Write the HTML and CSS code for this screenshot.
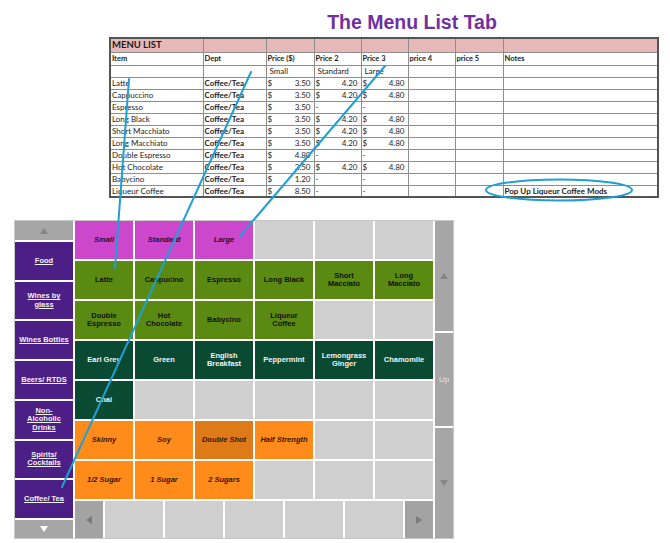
FILE: index.html
```html
<!DOCTYPE html>
<html lang="en">
<head>
  <meta charset="UTF-8">
  <title>The Menu List Tab</title>
  <link rel="stylesheet" href="styles.css">
</head>
<body>
<h1 class="title">The Menu List Tab</h1>

<table class="sheet">
  <colgroup>
    <col class="w-item"><col class="w-dept"><col class="w-p1"><col class="w-p">
    <col class="w-p"><col class="w-p"><col class="w-p5"><col class="w-notes">
  </colgroup>
  <tr class="head-row">
    <td class="sheet-name">MENU LIST</td><td></td><td></td><td></td><td></td><td></td><td></td><td></td>
  </tr>
  <tr class="col-row">
    <td>Item</td><td>Dept</td><td>Price ($)</td><td>Price 2</td><td>Price 3</td><td>price 4</td><td>price 5</td><td>Notes</td>
  </tr>
  <tr class="size-row">
    <td></td><td></td><td>Small</td><td>Standard</td><td>Large</td><td></td><td></td><td></td>
  </tr>
  <tr>
    <td>Latte</td><td class="dept">Coffee/Tea</td>
    <td><div class="money"><span>$</span><span>3.50</span></div></td>
    <td><div class="money"><span>$</span><span>4.20</span></div></td>
    <td><div class="money"><span>$</span><span>4.80</span></div></td>
    <td></td><td></td><td></td>
  </tr>
  <tr>
    <td>Cappuccino</td><td class="dept">Coffee/Tea</td>
    <td><div class="money"><span>$</span><span>3.50</span></div></td>
    <td><div class="money"><span>$</span><span>4.20</span></div></td>
    <td><div class="money"><span>$</span><span>4.80</span></div></td>
    <td></td><td></td><td></td>
  </tr>
  <tr>
    <td>Espresso</td><td class="dept">Coffee/Tea</td>
    <td><div class="money"><span>$</span><span>3.50</span></div></td>
    <td>-</td><td>-</td>
    <td></td><td></td><td></td>
  </tr>
  <tr>
    <td>Long Black</td><td class="dept">Coffee/Tea</td>
    <td><div class="money"><span>$</span><span>3.50</span></div></td>
    <td><div class="money"><span>$</span><span>4.20</span></div></td>
    <td><div class="money"><span>$</span><span>4.80</span></div></td>
    <td></td><td></td><td></td>
  </tr>
  <tr>
    <td>Short Macchiato</td><td class="dept">Coffee/Tea</td>
    <td><div class="money"><span>$</span><span>3.50</span></div></td>
    <td><div class="money"><span>$</span><span>4.20</span></div></td>
    <td><div class="money"><span>$</span><span>4.80</span></div></td>
    <td></td><td></td><td></td>
  </tr>
  <tr>
    <td>Long Macchiato</td><td class="dept">Coffee/Tea</td>
    <td><div class="money"><span>$</span><span>3.50</span></div></td>
    <td><div class="money"><span>$</span><span>4.20</span></div></td>
    <td><div class="money"><span>$</span><span>4.80</span></div></td>
    <td></td><td></td><td></td>
  </tr>
  <tr>
    <td>Double Espresso</td><td class="dept">Coffee/Tea</td>
    <td><div class="money"><span>$</span><span>4.80</span></div></td>
    <td>-</td><td>-</td>
    <td></td><td></td><td></td>
  </tr>
  <tr>
    <td>Hot Chocolate</td><td class="dept">Coffee/Tea</td>
    <td><div class="money"><span>$</span><span>3.50</span></div></td>
    <td><div class="money"><span>$</span><span>4.20</span></div></td>
    <td><div class="money"><span>$</span><span>4.80</span></div></td>
    <td></td><td></td><td></td>
  </tr>
  <tr>
    <td>Babycino</td><td class="dept">Coffee/Tea</td>
    <td><div class="money"><span>$</span><span>1.20</span></div></td>
    <td>-</td><td>-</td>
    <td></td><td></td><td></td>
  </tr>
  <tr>
    <td>Liqueur Coffee</td><td class="dept">Coffee/Tea</td>
    <td><div class="money"><span>$</span><span>8.50</span></div></td>
    <td>-</td><td>-</td>
    <td></td><td></td><td class="dept">Pop Up Liqueur Coffee Mods</td>
  </tr>
</table>

<div class="pos">
  <div class="dept-col">
    <div class="scroll-btn"><span class="tri up"></span></div>
    <div class="dept-btn"><span>Food</span></div>
    <div class="dept-btn"><span>Wines by glass</span></div>
    <div class="dept-btn"><span>Wines Bottles</span></div>
    <div class="dept-btn"><span>Beers/ RTDS</span></div>
    <div class="dept-btn"><span>Non-Alcoholic Drinks</span></div>
    <div class="dept-btn"><span>Spirits/ Cocktails</span></div>
    <div class="dept-btn"><span>Coffee/ Tea</span></div>
    <div class="scroll-btn short"><span class="tri down white"></span></div>
  </div>

  <div class="main-col">
    <div class="item-grid">
      <div class="item mod">Small</div>
      <div class="item mod">Standard</div>
      <div class="item mod">Large</div>
      <div class="item"></div>
      <div class="item"></div>
      <div class="item"></div>

      <div class="item coffee">Latte</div>
      <div class="item coffee">Cappucino</div>
      <div class="item coffee">Espresso</div>
      <div class="item coffee">Long Black</div>
      <div class="item coffee">Short<br>Macciato</div>
      <div class="item coffee">Long<br>Macciato</div>

      <div class="item coffee">Double<br>Espresso</div>
      <div class="item coffee">Hot<br>Chocolate</div>
      <div class="item coffee">Babycino</div>
      <div class="item coffee">Liqueur<br>Coffee</div>
      <div class="item"></div>
      <div class="item"></div>

      <div class="item tea">Earl Grey</div>
      <div class="item tea">Green</div>
      <div class="item tea">English<br>Breakfast</div>
      <div class="item tea">Peppermint</div>
      <div class="item tea">Lemongrass<br>Ginger</div>
      <div class="item tea">Chamomile</div>

      <div class="item tea">Chai</div>
      <div class="item"></div>
      <div class="item"></div>
      <div class="item"></div>
      <div class="item"></div>
      <div class="item"></div>

      <div class="item extra">Skinny</div>
      <div class="item extra">Soy</div>
      <div class="item extra on">Double Shot</div>
      <div class="item extra">Half Strength</div>
      <div class="item"></div>
      <div class="item"></div>

      <div class="item extra">1/2 Sugar</div>
      <div class="item extra">1 Sugar</div>
      <div class="item extra">2 Sugars</div>
      <div class="item"></div>
      <div class="item"></div>
      <div class="item"></div>
    </div>

    <div class="page-bar">
      <div class="page-btn"><span class="tri left"></span></div>
      <div class="page-slot"></div>
      <div class="page-slot"></div>
      <div class="page-slot"></div>
      <div class="page-slot"></div>
      <div class="page-slot"></div>
      <div class="page-btn"><span class="tri right"></span></div>
    </div>
  </div>

  <div class="side-col">
    <div class="side-seg tall"><span class="tri up"></span></div>
    <div class="side-seg mid">Up</div>
    <div class="side-seg tall"><span class="tri down"></span></div>
  </div>
</div>

<!-- callouts linking spreadsheet rows to the buttons they create -->
<svg class="callouts" width="670" height="543" viewBox="0 0 670 543">
  <line x1="129" y1="79" x2="115" y2="268" />
  <line x1="251" y1="72" x2="62" y2="487" />
  <line x1="385" y1="66" x2="240" y2="236" />
  <ellipse cx="559" cy="190" rx="73" ry="10.5" />
</svg>
</body>
</html>
```

FILE: styles.css
```css
body {
  margin: 0;
  width: 670px;
  height: 543px;
  position: relative;
  overflow: hidden;
  background: #fff;
  font-family: "Liberation Sans", Arial, sans-serif;
}
.title {
  margin: 0;
  padding: 11px 0 0 154px;
  font-size: 19.5px;
  line-height: 22px;
  text-align: center;
  color: #7030a0;
}

/* spreadsheet */
.sheet {
  margin: 4px 0 0 109px;
  width: 548px;
  border-collapse: collapse;
  table-layout: fixed;
  border: 2px solid #555;
  font-family: Lato, "Liberation Sans", sans-serif;
  font-size: 8px;
  color: #1c1c1c;
}
.w-item { width: 93px; }
.w-dept { width: 63px; }
.w-p1 { width: 48px; }
.w-p { width: 47px; }
.w-p5 { width: 48px; }
.w-notes { width: 155px; }
.sheet tr {
  height: 12px;
}
.sheet td {
  border: 1px solid #8e8e8e;
  padding: 0 1px;
  line-height: 10px;
  white-space: nowrap;
  overflow: hidden;
}
.head-row {
  background: #e6b8b7;
}
.sheet .head-row {
  height: 14px;
}
.sheet-name {
  font-weight: bold;
  font-size: 9.5px;
}
.sheet .col-row {
  height: 13px;
}
.col-row td {
  font-weight: bold;
  font-size: 7.5px;
}
.size-row td {
  padding-left: 3px;
}
.dept {
  font-weight: bold;
}
.money {
  display: flex;
  justify-content: space-between;
  padding-right: 2px;
}

/* till layout */
.pos {
  margin: 22px 0 0 14px;
  width: 438px;
  height: 317px;
  border: 1px solid #c8c8c8;
  display: flex;
  gap: 2px;
}
.dept-col {
  width: 58px;
  display: flex;
  flex-direction: column;
  gap: 2px;
}
.scroll-btn {
  height: 19px;
  background: #a6a6a6;
  display: flex;
  align-items: center;
  justify-content: center;
}
.scroll-btn.short {
  height: 18px;
}
.dept-btn {
  flex: 1;
  background: #4b1f86;
  display: flex;
  align-items: center;
  justify-content: center;
  text-align: center;
  padding: 0 4px;
  color: #f2f2f2;
  font-size: 7.5px;
  font-weight: bold;
  line-height: 8.5px;
}
.dept-btn span {
  text-decoration: underline;
}
.main-col {
  width: 358px;
  display: flex;
  flex-direction: column;
  gap: 2px;
}
.item-grid {
  display: grid;
  grid-template-columns: repeat(6, 58px);
  grid-template-rows: repeat(7, 38px);
  gap: 2px;
}
.item {
  background: #cfcfcf;
  display: flex;
  align-items: center;
  justify-content: center;
  text-align: center;
  font-size: 7.5px;
  font-weight: bold;
  line-height: 8.5px;
  color: #111;
}
.item.mod {
  background: #cc47cc;
  color: #2c0d33;
  font-style: italic;
}
.item.coffee {
  background: #5a8a12;
}
.item.tea {
  background: #0a4a33;
  color: #f4f4f4;
}
.item.extra {
  background: #ff8c1a;
  color: #3a1400;
  font-style: italic;
}
.item.extra.on {
  background: #de7a18;
}
.page-bar {
  flex: 1;
  display: flex;
  gap: 2px;
}
.page-btn {
  width: 28px;
  background: #a3a3a3;
  display: flex;
  align-items: center;
  justify-content: center;
}
.page-slot {
  flex: 1;
  background: #cfcfcf;
}
.side-col {
  width: 18px;
  display: flex;
  flex-direction: column;
  gap: 2px;
}
.side-seg {
  background: #a6a6a6;
  display: flex;
  align-items: center;
  justify-content: center;
}
.side-seg.tall {
  height: 110px;
}
.side-seg.mid {
  flex: 1;
  color: #e4e4e4;
  font-size: 8px;
}

/* arrow glyphs */
.tri {
  width: 0;
  height: 0;
  border: 4px solid transparent;
}
.tri.up {
  border-top: 0;
  border-bottom: 6px solid #858585;
}
.tri.down {
  border-bottom: 0;
  border-top: 6px solid #858585;
}
.tri.down.white {
  border-top-color: #fff;
}
.tri.left {
  border-left: 0;
  border-right: 6px solid #7a7a7a;
}
.tri.right {
  border-right: 0;
  border-left: 6px solid #7a7a7a;
}

.callouts {
  position: absolute;
  top: 0;
  left: 0;
  pointer-events: none;
}
.callouts line,
.callouts ellipse {
  fill: none;
  stroke: #1ea0d4;
  stroke-width: 2;
  stroke-linecap: round;
}
```
